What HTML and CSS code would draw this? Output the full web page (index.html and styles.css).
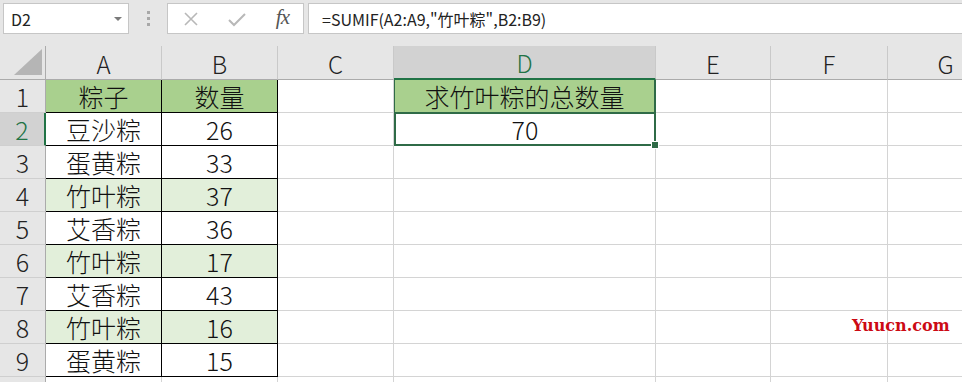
FILE: index.html
```html
<!DOCTYPE html>
<html lang="zh-CN">
<head>
  <meta charset="UTF-8">
  <title>SUMIF</title>
  <link rel="stylesheet" href="styles.css">
</head>
<body>

  <!-- Formula bar -->
  <div class="toolbar">
    <div class="namebox">
      <span>D2</span>
      <svg class="drop" width="8" height="4" viewBox="0 0 8 4"><path d="M0 0 L8 0 L4 4 Z" fill="#7a7a7a"/></svg>
    </div>
    <div class="grip"><i></i><i></i><i></i></div>
    <div class="fxbox">
      <svg width="16" height="16" viewBox="0 0 16 16"><path d="M2 2 L14 14 M14 2 L2 14" stroke="#b8b8b8" stroke-width="1.6" fill="none"/></svg>
      <svg width="18" height="16" viewBox="0 0 18 16"><path d="M1 9 L6 14 L17 3" stroke="#b8b8b8" stroke-width="2" fill="none"/></svg>
      <span class="fx">fx</span>
    </div>
    <div class="formula">=SUMIF(A2:A9,"竹叶粽",B2:B9)</div>
  </div>

  <!-- Sheet -->
  <div class="sheet">
    <div class="corner"><svg width="28" height="26" viewBox="0 0 28 26"><path d="M28 0 L28 26 L0 26 Z" fill="#b5b5b5"/></svg></div>
    <div class="colhead">A</div>
    <div class="colhead">B</div>
    <div class="colhead">C</div>
    <div class="colhead active">D</div>
    <div class="colhead">E</div>
    <div class="colhead">F</div>
    <div class="colhead">G</div>

    <div class="rowhead">1</div>
    <div class="cell t head">粽子</div>
    <div class="cell t head">数量</div>
    <div class="cell"></div>
    <div class="cell title">求竹叶粽的总数量</div>
    <div class="cell"></div><div class="cell"></div><div class="cell"></div>

    <div class="rowhead active">2</div>
    <div class="cell t">豆沙粽</div>
    <div class="cell t">26</div>
    <div class="cell"></div>
    <div class="cell selected">70<span class="handle"></span></div>
    <div class="cell"></div><div class="cell"></div><div class="cell"></div>

    <div class="rowhead">3</div>
    <div class="cell t">蛋黄粽</div>
    <div class="cell t">33</div>
    <div class="cell"></div><div class="cell"></div><div class="cell"></div><div class="cell"></div><div class="cell"></div>

    <div class="rowhead">4</div>
    <div class="cell t hit">竹叶粽</div>
    <div class="cell t hit">37</div>
    <div class="cell"></div><div class="cell"></div><div class="cell"></div><div class="cell"></div><div class="cell"></div>

    <div class="rowhead">5</div>
    <div class="cell t">艾香粽</div>
    <div class="cell t">36</div>
    <div class="cell"></div><div class="cell"></div><div class="cell"></div><div class="cell"></div><div class="cell"></div>

    <div class="rowhead">6</div>
    <div class="cell t hit">竹叶粽</div>
    <div class="cell t hit">17</div>
    <div class="cell"></div><div class="cell"></div><div class="cell"></div><div class="cell"></div><div class="cell"></div>

    <div class="rowhead">7</div>
    <div class="cell t">艾香粽</div>
    <div class="cell t">43</div>
    <div class="cell"></div><div class="cell"></div><div class="cell"></div><div class="cell"></div><div class="cell"></div>

    <div class="rowhead">8</div>
    <div class="cell t hit">竹叶粽</div>
    <div class="cell t hit">16</div>
    <div class="cell"></div><div class="cell"></div><div class="cell"></div><div class="cell"></div><div class="cell"></div>

    <div class="rowhead">9</div>
    <div class="cell t">蛋黄粽</div>
    <div class="cell t">15</div>
    <div class="cell"></div><div class="cell"></div><div class="cell"></div><div class="cell"></div><div class="cell"></div>

    <div class="rowhead"></div>
    <div class="cell"></div><div class="cell"></div><div class="cell"></div><div class="cell"></div><div class="cell"></div><div class="cell"></div><div class="cell"></div>
  </div>

  <div class="watermark">Yuucn.com</div>

</body>
</html>
```

FILE: styles.css
```css
body {
  margin: 0;
  padding: 0;
  width: 962px;
  height: 382px;
  overflow: hidden;
  background: #fff;
  font-family: "Noto Sans CJK SC", "Noto Sans", sans-serif;
  color: #111;
  position: relative;
}

/* formula bar */
.toolbar {
  height: 46px;
  box-sizing: border-box;
  padding: 3px 0 0 3px;
  background: #e6e6e6;
  display: flex;
  align-items: flex-start;
}

.namebox,
.fxbox,
.formula {
  height: 31px;
  box-sizing: border-box;
  background: #fff;
  border: 1px solid #c6c6c6;
  display: flex;
  align-items: center;
}

.namebox {
  width: 126px;
  padding: 0 6px 0 7px;
  justify-content: space-between;
  font-size: 16px;
  color: #222;
}

.grip {
  width: 38px;
  display: flex;
  flex-direction: column;
  align-items: center;
  gap: 3px;
  padding-top: 8px;
}

.grip i {
  width: 3px;
  height: 3px;
  background: #a8a8a8;
}

.fxbox {
  width: 137px;
  padding: 0 14px 0 15px;
  justify-content: space-between;
}

.fx {
  font-family: "Liberation Serif", serif;
  font-style: italic;
  font-size: 21px;
  color: #555;
  letter-spacing: -1px;
  margin-top: -3px;
}

.formula {
  flex: 1;
  margin-left: 4px;
  border-right: none;
  padding-left: 13px;
  font-size: 16px;
  color: #222;
}

/* sheet */
.sheet {
  height: 336px;
  overflow: hidden;
  display: grid;
  grid-template-columns: 46px 116px 116px 116px 262px 115px 117px 116px;
  grid-template-rows: 34px;
  grid-auto-rows: 33px;
  font-size: 25px;
  font-weight: 300;
}

.sheet > div {
  box-sizing: border-box;
  display: flex;
  align-items: center;
  justify-content: center;
  border-right: 1px solid #d4d4d4;
  border-bottom: 1px solid #d4d4d4;
  line-height: 1;
}

.corner {
  background: #e6e6e6;
  border-right-color: #ababab !important;
  border-bottom-color: #ababab !important;
  justify-content: flex-end !important;
  align-items: flex-end !important;
  padding: 0 3px 4px 0;
}

.colhead {
  background: #e6e6e6;
  border-right-color: #c9c9c9 !important;
  border-bottom-color: #ababab !important;
  font-size: 24px;
  color: #222;
  padding-top: 2px;
}

.colhead.active {
  background: #d2d2d2;
  color: #217346;
  border-bottom: 2px solid #217346 !important;
}

.rowhead {
  background: #e6e6e6;
  border-right-color: #ababab !important;
  border-bottom-color: #cfcfcf !important;
  font-size: 25px;
  color: #222;
}

.rowhead.active {
  background: #d2d2d2;
  color: #217346;
  border-right: 2px solid #217346 !important;
}

.cell {
  font-size: 25px;
  color: #111;
}

.cell.t {
  border-right-color: #000 !important;
  border-bottom-color: #000 !important;
}

.cell.head {
  background: #a9d08e;
}

.cell.hit {
  background: #e2efda;
}

.cell.title {
  background: #a9d08e;
  box-shadow: inset 1px 0 0 #2f6b47, inset -1px 0 0 #2f6b47;
  border-right-color: #2f6b47 !important;
  border-bottom-color: #2f6b47 !important;
}

.cell.selected {
  position: relative;
  border: 2px solid #2f6b47 !important;
  border-top: 1px solid #2f6b47 !important;
}

.handle {
  position: absolute;
  right: -5px;
  bottom: -5px;
  width: 6px;
  height: 6px;
  background: #2f6b47;
  border: 1px solid #fff;
}

.watermark {
  position: absolute;
  left: 852px;
  top: 316px;
  font-family: "DejaVu Serif", serif;
  font-weight: bold;
  font-size: 16px;
  color: #cc0a14;
}
```
